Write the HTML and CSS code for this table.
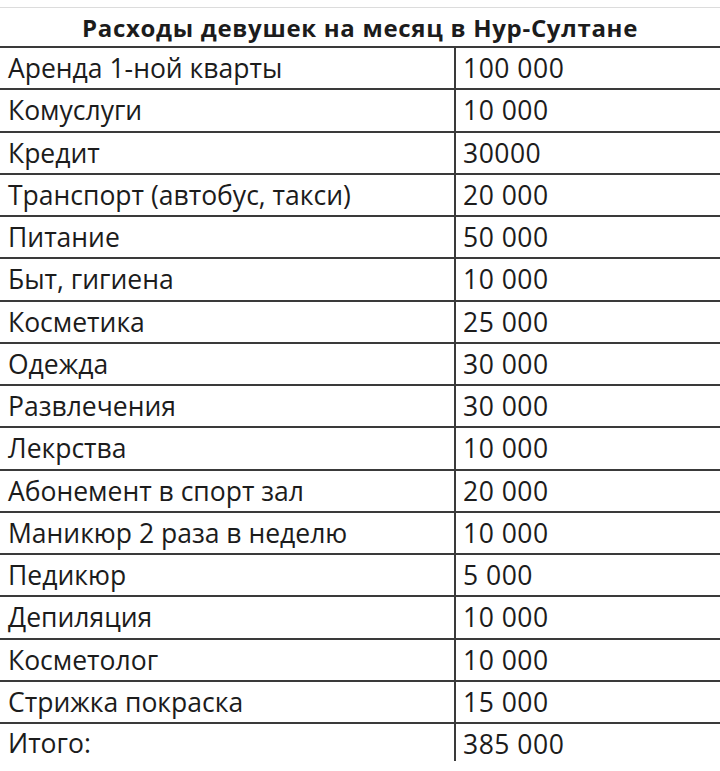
FILE: index.html
```html
<!DOCTYPE html>
<html lang="ru">
<head>
<meta charset="utf-8">
<link rel="stylesheet" href="styles.css">
</head>
<body>
<div class="sheet">
  <div class="title">Расходы девушек на месяц в Нур-Султане</div>
  <div class="table">
    <div class="row"><div class="name">Аренда 1-ной кварты</div><div class="sum">100 000</div></div>
    <div class="row"><div class="name">Комуслуги</div><div class="sum">10 000</div></div>
    <div class="row"><div class="name">Кредит</div><div class="sum">30000</div></div>
    <div class="row"><div class="name">Транспорт (автобус, такси)</div><div class="sum">20 000</div></div>
    <div class="row"><div class="name">Питание</div><div class="sum">50 000</div></div>
    <div class="row"><div class="name">Быт, гигиена</div><div class="sum">10 000</div></div>
    <div class="row"><div class="name">Косметика</div><div class="sum">25 000</div></div>
    <div class="row"><div class="name">Одежда</div><div class="sum">30 000</div></div>
    <div class="row"><div class="name">Развлечения</div><div class="sum">30 000</div></div>
    <div class="row"><div class="name">Лекрства</div><div class="sum">10 000</div></div>
    <div class="row"><div class="name">Абонемент в спорт зал</div><div class="sum">20 000</div></div>
    <div class="row"><div class="name">Маникюр 2 раза в неделю</div><div class="sum">10 000</div></div>
    <div class="row"><div class="name">Педикюр</div><div class="sum">5 000</div></div>
    <div class="row"><div class="name">Депиляция</div><div class="sum">10 000</div></div>
    <div class="row"><div class="name">Косметолог</div><div class="sum">10 000</div></div>
    <div class="row"><div class="name">Стрижка покраска</div><div class="sum">15 000</div></div>
    <div class="row last"><div class="name">Итого:</div><div class="sum">385 000</div></div>
  </div>
</div>
</body>
</html>
```
FILE: styles.css
```css
html, body {
  margin: 0;
  padding: 0;
  background: #ffffff;
}
.sheet {
  width: 720px;
  height: 771px;
  overflow: hidden;
  font-family: "Open Sans", "Liberation Sans", sans-serif;
  color: #1c1c1c;
}
.title {
  margin-top: 7px;
  border-top: 1px solid #dcdcdc;
  height: 39px;
  display: flex;
  align-items: center;
  justify-content: center;
  font-weight: 700;
  font-size: 24px;
  letter-spacing: 0.7px;
  padding-top: 1px;
  box-sizing: border-box;
}
.table {
  display: flex;
  flex-direction: column;
}
.row {
  display: grid;
  grid-template-columns: 456px 1fr;
  height: 42.25px;
  box-sizing: border-box;
  border-top: 2px solid #3a3a3a;
  font-size: 26.5px;
}
.name {
  border-right: 2px solid #3a3a3a;
  padding-left: 8px;
  display: flex;
  align-items: center;
}
.sum {
  padding-left: 7px;
  letter-spacing: 0.5px;
  display: flex;
  align-items: center;
}
.row.last .name {
  height: 37px;
}
```
